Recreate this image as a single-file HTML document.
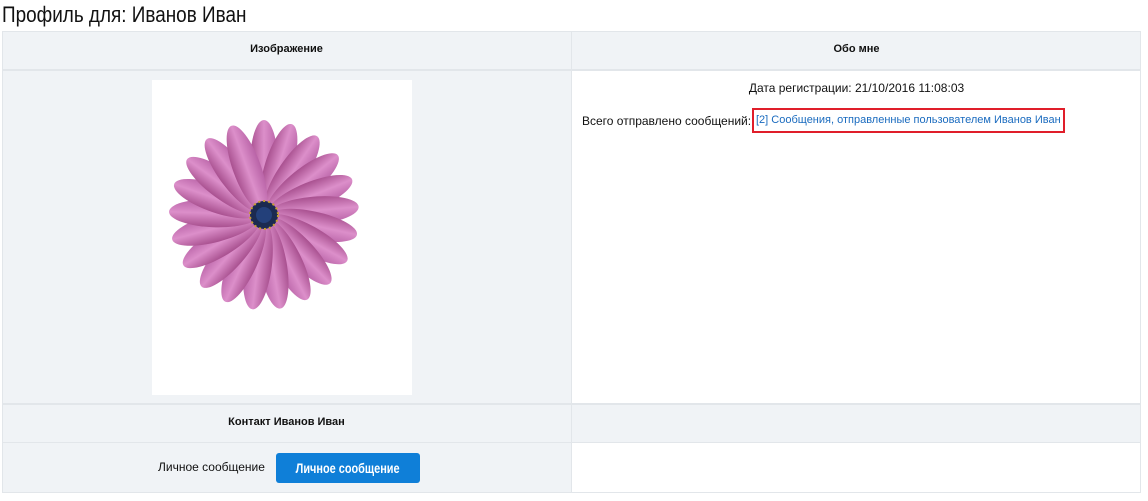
<!DOCTYPE html>
<html><head><meta charset="utf-8"><style>
body{margin:0;background:#fff;font-family:"Liberation Sans",sans-serif;color:#111;width:1148px;height:501px;overflow:hidden;position:relative}
.abs{position:absolute}
h1{position:absolute;left:2px;top:2px;margin:0;font-weight:normal;font-size:22px;transform:scaleX(.86);transform-origin:left;white-space:nowrap}
.gr{background:#f0f3f6}
.c{text-align:center;font-size:12px;white-space:nowrap}
</style></head><body>
<h1>Профиль для: Иванов Иван</h1>
<div class="abs gr" style="left:2px;top:31px;width:1139px;height:462px;border:1px solid #e2e6ea;box-sizing:border-box"></div>
<div class="abs" style="left:2px;top:69px;width:1139px;height:2px;background:#e2e6ea"></div>
<div class="abs" style="left:571px;top:31px;width:1px;height:462px;background:#e2e6ea"></div>
<div class="abs" style="left:572px;top:71px;width:568px;height:332px;background:#fff"></div>
<div class="abs" style="left:2px;top:403px;width:1139px;height:2px;background:#e2e6ea"></div>
<div class="abs" style="left:2px;top:442px;width:1139px;height:1px;background:#e2e6ea"></div>
<div class="abs" style="left:572px;top:443px;width:568px;height:49px;background:#fff"></div>
<div class="abs c" style="left:2px;width:569px;top:43px;font-weight:bold;font-size:11px">Изображение</div>
<div class="abs c" style="left:572px;width:569px;top:43px;font-weight:bold;font-size:11px">Обо мне</div>
<div class="abs c" style="left:2px;width:569px;top:416px;font-weight:bold;font-size:11px">Контакт Иванов Иван</div>
<div class="abs" style="left:152px;top:80px;width:260px;height:315px;background:#fff">
<svg width="260" height="315" viewBox="0 0 260 315">
<defs><linearGradient id="p" x1="0" y1="0" x2="1" y2="0"><stop offset="0" stop-color="#a8508f"/><stop offset=".5" stop-color="#dc8fca"/><stop offset="1" stop-color="#b862a6"/></linearGradient></defs>
<g transform="translate(112,135)">
<ellipse cx="0" cy="-50" rx="14" ry="45" fill="url(#p)" transform="rotate(0)"/>
<ellipse cx="0" cy="-50" rx="14" ry="45" fill="url(#p)" transform="rotate(17)"/>
<ellipse cx="0" cy="-50" rx="14" ry="45" fill="url(#p)" transform="rotate(34)"/>
<ellipse cx="0" cy="-50" rx="14" ry="45" fill="url(#p)" transform="rotate(51)"/>
<ellipse cx="0" cy="-50" rx="14" ry="45" fill="url(#p)" transform="rotate(68)"/>
<ellipse cx="0" cy="-50" rx="14" ry="45" fill="url(#p)" transform="rotate(85)"/>
<ellipse cx="0" cy="-50" rx="14" ry="45" fill="url(#p)" transform="rotate(102)"/>
<ellipse cx="0" cy="-50" rx="14" ry="45" fill="url(#p)" transform="rotate(119)"/>
<ellipse cx="0" cy="-50" rx="14" ry="45" fill="url(#p)" transform="rotate(136)"/>
<ellipse cx="0" cy="-50" rx="14" ry="45" fill="url(#p)" transform="rotate(153)"/>
<ellipse cx="0" cy="-50" rx="14" ry="45" fill="url(#p)" transform="rotate(170)"/>
<ellipse cx="0" cy="-50" rx="14" ry="45" fill="url(#p)" transform="rotate(187)"/>
<ellipse cx="0" cy="-50" rx="14" ry="45" fill="url(#p)" transform="rotate(204)"/>
<ellipse cx="0" cy="-50" rx="14" ry="45" fill="url(#p)" transform="rotate(221)"/>
<ellipse cx="0" cy="-50" rx="14" ry="45" fill="url(#p)" transform="rotate(238)"/>
<ellipse cx="0" cy="-50" rx="14" ry="45" fill="url(#p)" transform="rotate(255)"/>
<ellipse cx="0" cy="-50" rx="14" ry="45" fill="url(#p)" transform="rotate(272)"/>
<ellipse cx="0" cy="-50" rx="14" ry="45" fill="url(#p)" transform="rotate(289)"/>
<ellipse cx="0" cy="-50" rx="14" ry="45" fill="url(#p)" transform="rotate(306)"/>
<ellipse cx="0" cy="-50" rx="14" ry="45" fill="url(#p)" transform="rotate(323)"/>
<ellipse cx="0" cy="-50" rx="14" ry="45" fill="url(#p)" transform="rotate(340)"/>
<circle r="14" fill="#1b2a50"/><circle r="14" fill="none" stroke="#c9a030" stroke-width="2" stroke-dasharray="2 3"/><circle r="8" fill="#23407a"/>
</g></svg></div>
<div class="abs c" style="left:572px;width:569px;top:81px">Дата регистрации: 21/10/2016 11:08:03</div>
<div class="abs" style="left:582px;top:114px;font-size:12px;white-space:nowrap">Всего отправлено сообщений:</div>
<div class="abs" style="left:752px;top:108px;width:313px;height:25px;border:2px solid #e01e2a;box-sizing:border-box"></div>
<div class="abs" style="left:756px;top:114px;font-size:11px;color:#1a6bbf;white-space:nowrap">[2] Сообщения, отправленные пользователем Иванов Иван</div>
<div class="abs" style="left:158px;top:460px;font-size:12px;white-space:nowrap">Личное сообщение</div>
<div class="abs" style="left:276px;top:453px;width:144px;height:30px;background:#0f7fd8;border-radius:3px;color:#fff;font-size:14px;font-weight:bold;text-align:center;line-height:30px;white-space:nowrap;overflow:hidden"><span style="display:inline-block;transform:scaleX(.78);margin:0 -20px">Личное сообщение</span></div>
</body></html>
